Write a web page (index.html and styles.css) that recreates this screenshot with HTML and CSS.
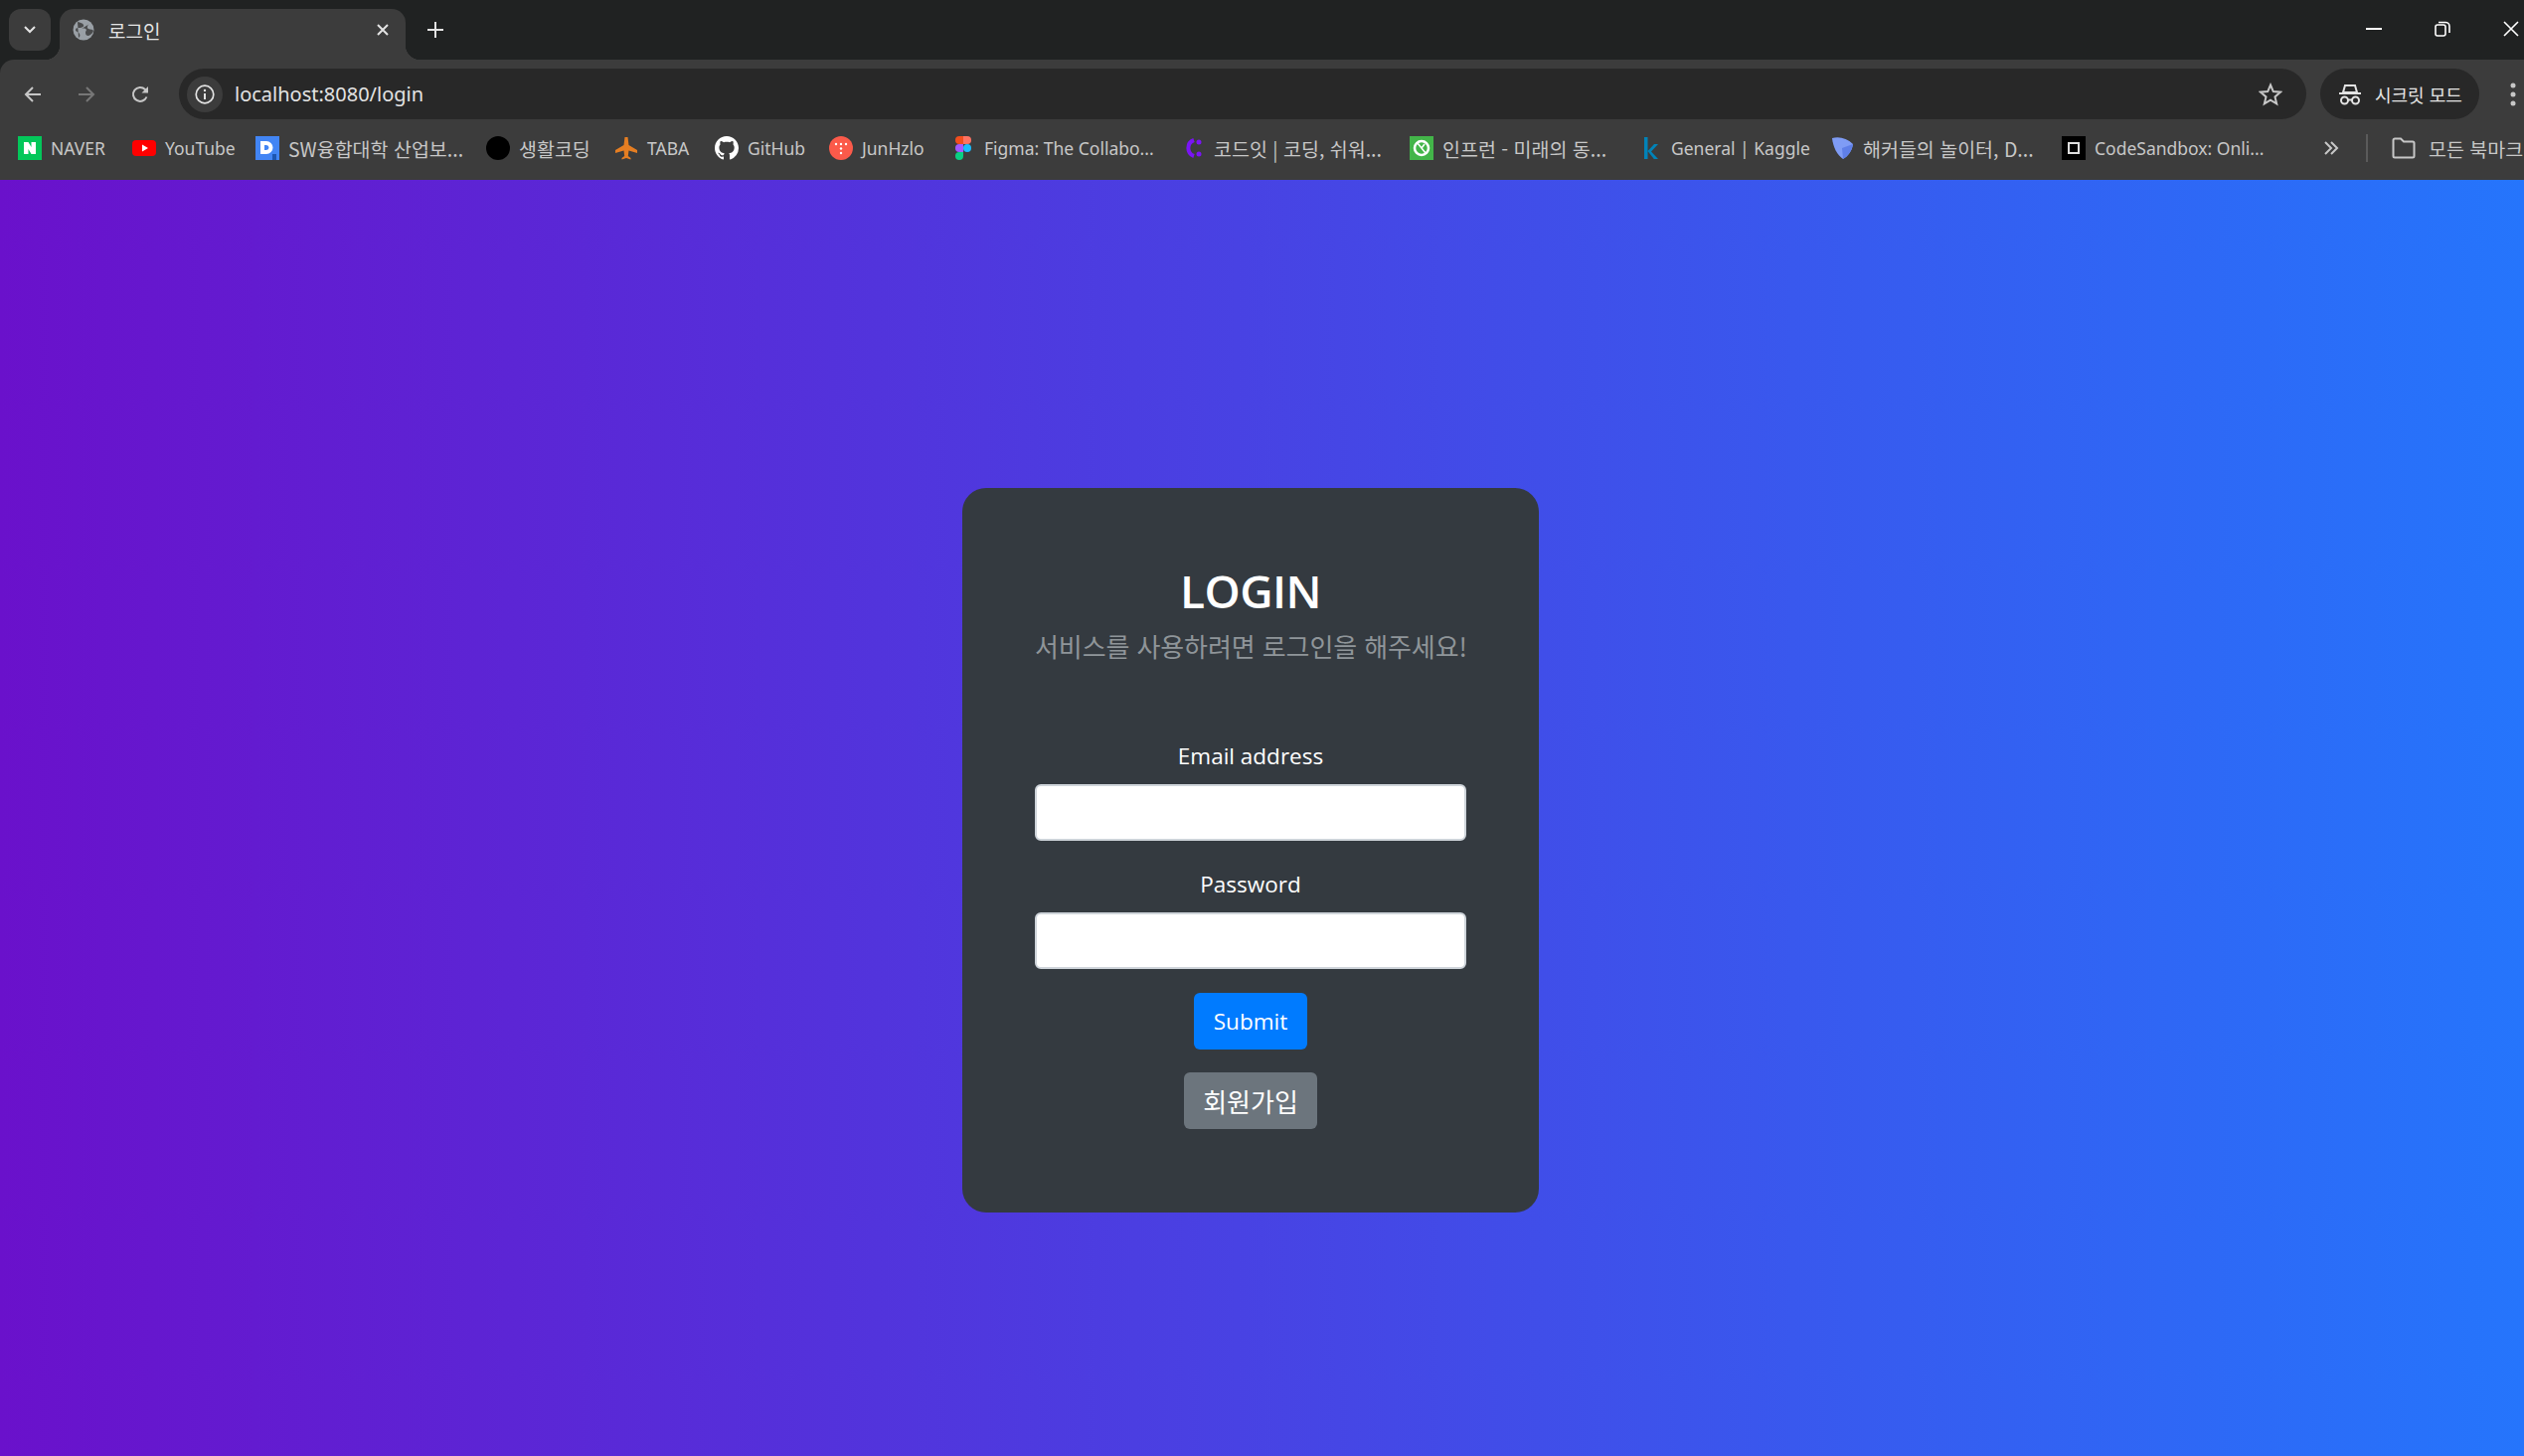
FILE: index.html
```html
<!DOCTYPE html>
<html lang="ko">
<head>
<meta charset="utf-8">
<title>로그인</title>
<link rel="stylesheet" href="styles.css">
</head>
<body>
<div class="chrome">
  <div class="tabstrip">
    <button class="tabsearch"><svg width="14" height="10" viewBox="0 0 14 10"><path d="M2 2l5 5 5-5" fill="none" stroke="#e3e3e3" stroke-width="2"/></svg></button>
    <div class="tab">
      <svg class="favicon" width="22" height="22" viewBox="0 0 22 22"><circle cx="11" cy="11" r="10.5" fill="#9aa0a6"/><path d="M5 3c3 1 5 1 6 3s-2 3-4 3-4 0-4 2 3 2 4 4 0 3-1 4M17 5c-2 1-3 4-1 5s4 0 5 2c-1 3-3 4-5 5-2 0-3-1-3-3s2-3 0-4-4 0-4 0" fill="#3c3c3c" opacity=".85"/></svg>
      <span class="tabtitle">로그인</span>
      <svg class="tabclose" width="12" height="12" viewBox="0 0 12 12"><path d="M1 1l10 10M11 1L1 11" stroke="#e3e3e3" stroke-width="2"/></svg>
    </div>
    <svg class="newtab" width="16" height="16" viewBox="0 0 16 16"><path d="M8 0v16M0 8h16" stroke="#e3e3e3" stroke-width="2"/></svg>
    <div class="winctl">
      <svg width="16" height="2" viewBox="0 0 16 2"><path d="M0 1h16" stroke="#fff" stroke-width="2"/></svg>
      <svg width="16" height="16" viewBox="0 0 16 16"><rect x="1" y="4" width="10" height="11" rx="2" fill="none" stroke="#fff" stroke-width="1.6"/><path d="M4 1.500h7a4 4 0 0 1 4 4V12" fill="none" stroke="#fff" stroke-width="1.6"/></svg>
      <svg width="16" height="16" viewBox="0 0 16 16"><path d="M1 1l14 14M15 1L1 15" stroke="#fff" stroke-width="1.6"/></svg>
    </div>
  </div>
  <div class="toolbar">
    <svg class="navicon" width="20" height="20" viewBox="0 0 20 20"><path d="M18 10H3M10 3l-7 7 7 7" fill="none" stroke="#c7c7c7" stroke-width="2"/></svg>
    <svg class="navicon" width="20" height="20" viewBox="0 0 20 20"><path d="M2 10h15M10 3l7 7-7 7" fill="none" stroke="#777" stroke-width="2"/></svg>
    <svg class="navicon reload" width="20" height="20" viewBox="0 0 20 20"><path d="M16.500 12.500A7 7 0 1 1 15 5l2.500 2.500" fill="none" stroke="#c7c7c7" stroke-width="2"/><path d="M18 2v6.500h-6.500z" fill="#c7c7c7"/></svg>
    <div class="omnibox">
      <span class="siteinfo"><svg width="20" height="20" viewBox="0 0 20 20"><circle cx="10" cy="10" r="8.800" fill="none" stroke="#e3e3e3" stroke-width="1.700"/><path d="M10 9v6" stroke="#e3e3e3" stroke-width="2"/><circle cx="10" cy="6" r="1.200" fill="#e3e3e3"/></svg></span>
      <span class="url">localhost:8080/login</span>
      <svg class="star" width="24" height="24" viewBox="0 0 24 24"><path d="M12 2.500l2.800 6.600 7.200.6-5.500 4.700 1.700 7-6.200-3.700-6.200 3.700 1.700-7L2 9.700l7.200-.6z" fill="none" stroke="#c7c7c7" stroke-width="2"/></svg>
    </div>
    <div class="incognito">
      <svg width="22" height="22" viewBox="0 0 22 22"><path d="M6 2h10l2 7H4z" fill="none" stroke="#e3e3e3" stroke-width="2"/><path d="M0 10h22" stroke="#e3e3e3" stroke-width="2"/><circle cx="5.500" cy="17" r="3.500" fill="none" stroke="#e3e3e3" stroke-width="2"/><circle cx="16.500" cy="17" r="3.500" fill="none" stroke="#e3e3e3" stroke-width="2"/><path d="M9 16.500h4" stroke="#e3e3e3" stroke-width="2"/></svg>
      <span>시크릿 모드</span>
    </div>
    <svg class="menu" width="6" height="24" viewBox="0 0 6 24"><circle cx="3" cy="3" r="2.500" fill="#c7c7c7"/><circle cx="3" cy="12" r="2.500" fill="#c7c7c7"/><circle cx="3" cy="21" r="2.500" fill="#c7c7c7"/></svg>
  </div>
  <div class="bookmarks">
    <a class="bm bm-naver"><svg width="24" height="24" viewBox="0 0 24 24"><rect width="24" height="24" fill="#03c75a"/><path d="M6 6h4.500l3 5V6H18v12h-4.500l-3-5v5H6z" fill="#fff"/></svg><span>NAVER</span></a>
    <a class="bm bm-youtube"><svg width="24" height="24" viewBox="0 0 24 24"><rect y="4" width="24" height="16" rx="4" fill="#f00"/><path d="M10 8.500l6 3.500-6 3.500z" fill="#fff"/></svg><span>YouTube</span></a>
    <a class="bm ko bm-sw"><svg width="24" height="24" viewBox="0 0 24 24"><rect width="24" height="24" fill="#4285f4"/><path fill-rule="evenodd" d="M5 5h6a6.500 6.500 0 0 1 0 13H5zM9 9v5h2a2.500 2.500 0 0 0 0-5z" fill="#fff"/><rect x="17" y="18" width="4" height="6" fill="#1d56b0"/></svg><span>SW융합대학 산업보...</span></a>
    <a class="bm ko bm-life"><svg width="24" height="24" viewBox="0 0 24 24"><circle cx="12" cy="12" r="12" fill="#000"/></svg><span>생활코딩</span></a>
    <a class="bm bm-taba"><svg width="24" height="24" viewBox="0 0 24 24"><path d="M10.500 1h3l1 8L23 14v3l-8.500-2.500-.7 5.500 2.700 2v1.500L12 22l-4.500 1.500V22l2.700-2-.7-5.500L1 17v-3l8.500-5z" fill="#e67e22"/></svg><span>TABA</span></a>
    <a class="bm bm-github"><svg width="24" height="24" viewBox="0 0 16 16"><path fill="#fff" d="M8 0C3.580 0 0 3.580 0 8c0 3.540 2.290 6.530 5.470 7.590.4.070.55-.17.55-.38 0-.19-.01-.82-.01-1.490-2.010.37-2.530-.49-2.690-.94-.09-.23-.48-.94-.82-1.130-.28-.15-.68-.52-.01-.53.630-.01 1.080.58 1.230.82.720 1.210 1.870.87 2.330.66.070-.52.280-.87.510-1.070-1.780-.2-3.640-.89-3.640-3.950 0-.87.310-1.590.820-2.150-.08-.2-.36-1.020.08-2.120 0 0 .67-.21 2.200.82.640-.18 1.320-.27 2-.27s1.360.09 2 .27c1.530-1.040 2.200-.82 2.200-.82.440 1.100.16 1.920.08 2.120.51.560.82 1.270.82 2.150 0 3.070-1.870 3.750-3.650 3.950.29.250.54.730.54 1.480 0 1.070-.01 1.930-.01 2.200 0 .21.150.46.550.38A8.010 8.010 0 0 0 16 8c0-4.420-3.580-8-8-8z"/></svg><span>GitHub</span></a>
    <a class="bm bm-junhzlo"><svg width="24" height="24" viewBox="0 0 24 24"><circle cx="12" cy="12" r="12" fill="#fb5a4a"/><g fill="#fff"><circle cx="7" cy="8" r="1.200"/><circle cx="12" cy="8" r="1.200"/><circle cx="17" cy="8" r="1.200"/><circle cx="12" cy="12.500" r="1.200"/><circle cx="12" cy="17" r="1.200"/></g></svg><span>JunHzlo</span></a>
    <a class="bm bm-figma"><svg width="24" height="24" viewBox="0 0 16 24"><path d="M4 0h4v8H4a4 4 0 0 1 0-8z" fill="#f24e1e"/><path d="M8 0h4a4 4 0 0 1 0 8H8z" fill="#ff7262"/><path d="M4 8h4v8H4a4 4 0 0 1 0-8z" fill="#a259ff"/><circle cx="12" cy="12" r="4" fill="#1abcfe"/><path d="M4 16h4v4a4 4 0 1 1-4-4z" fill="#0acf83"/></svg><span>Figma: The Collabo...</span></a>
    <a class="bm ko bm-codeit"><svg width="24" height="24" viewBox="0 0 24 24"><path d="M13 4a8.500 8.500 0 0 0 0 16" fill="none" stroke="#7a14f5" stroke-width="4"/><circle cx="18" cy="6" r="2.500" fill="#7a14f5"/><circle cx="18" cy="18" r="2.500" fill="#7a14f5"/></svg><span>코드잇 | 코딩, 쉬워...</span></a>
    <a class="bm ko bm-inflearn"><svg width="24" height="24" viewBox="0 0 24 24"><rect width="24" height="24" fill="#43b549"/><circle cx="12" cy="12" r="7" fill="none" stroke="#fff" stroke-width="2.500"/><path d="M8 7l8 10M12 12l3-4" stroke="#fff" stroke-width="1.500"/></svg><span>인프런 - 미래의 동...</span></a>
    <a class="bm bm-kaggle"><svg width="24" height="24" viewBox="0 0 24 24"><path d="M6 1h3.500v22H6zM9.500 15L16 8h4l-7 7.500L20 23h-4.200z" fill="#0083b8"/></svg><span>General | Kaggle</span></a>
    <a class="bm ko bm-hackers"><svg width="24" height="24" viewBox="0 0 24 24"><path d="M2 2c7-2 15 0 21 6-1 7-5 12-10 15C7 19 3 11 2 2z" fill="#7f9cf5"/><path d="M12 12l11-4c-1 7-5 12-10 15z" fill="#5f7fe8"/></svg><span>해커들의 놀이터, D...</span></a>
    <a class="bm bm-sandbox"><svg width="24" height="24" viewBox="0 0 24 24"><rect width="24" height="24" fill="#000"/><rect x="7" y="7" width="10" height="10" fill="none" stroke="#ddd" stroke-width="2"/></svg><span>CodeSandbox: Onli...</span></a>
    <svg class="more" width="16" height="14" viewBox="0 0 16 14"><path d="M2 1l6 6-6 6M8 1l6 6-6 6" fill="none" stroke="#c7c7c7" stroke-width="2"/></svg>
    <i class="sep"></i>
    <a class="bm ko allbm"><svg width="24" height="22" viewBox="0 0 24 22"><path d="M1.500 3a1.500 1.500 0 0 1 1.500-1.500h6l3 3h9a1.500 1.500 0 0 1 1.500 1.500v13a1.500 1.500 0 0 1-1.500 1.500H3A1.500 1.500 0 0 1 1.500 19z" fill="none" stroke="#c7c7c7" stroke-width="2"/></svg><span>모든 북마크</span></a>
  </div>
</div>
<main class="page">
  <section class="card">
    <h2 class="title">LOGIN</h2>
    <p class="subtitle">서비스를 사용하려면 로그인을 해주세요!</p>
    <form class="form">
      <label class="label" for="email">Email address</label>
      <input class="input" id="email" type="email">
      <label class="label" for="pw">Password</label>
      <input class="input" id="pw" type="password">
      <button class="btn primary" type="button">Submit</button>
      <button class="btn secondary" type="button">회원가입</button>
    </form>
  </section>
</main>
</body>
</html>
```
FILE: styles.css
```css
* { box-sizing: border-box; }
html, body { margin: 0; height: 100%; }
body {
  display: flex;
  flex-direction: column;
  overflow: hidden;
  font-family: "Open Sans", "Noto Sans CJK KR", sans-serif;
}
.chrome { flex: none; background: #202222; color: #c7c7c7; }
.tabstrip {
  height: 60px;
  display: flex;
  align-items: flex-end;
}
.tabsearch {
  width: 42px;
  height: 42px;
  margin: 0 9px 9px 9px;
  background: #3c3c3c;
  border: 0;
  border-radius: 12px;
  padding: 0;
  display: flex;
  align-items: center;
  justify-content: center;
}
.tab {
  width: 348px;
  height: 51px;
  background: #3c3c3c;
  border-radius: 14px 14px 0 0;
  display: flex;
  align-items: center;
  padding: 0 17px 9px 13px;
  position: relative;
}
.tab::before,
.tab::after {
  content: "";
  position: absolute;
  bottom: 0;
  width: 15px;
  height: 15px;
}
.tab::before {
  left: -15px;
  background: radial-gradient(circle at 0 0, transparent 15px, #3c3c3c 15.500px);
}
.tab::after {
  right: -15px;
  background: radial-gradient(circle at 100% 0, transparent 15px, #3c3c3c 15.500px);
}
.favicon { flex: none; }
.tabtitle {
  margin-left: 14px;
  flex: 1;
  color: #e3e3e3;
  font-size: 19px;
  font-family: "Noto Sans CJK KR", sans-serif;
}
.newtab { margin: 0 0 22px 22px; }
.winctl {
  margin-left: auto;
  display: flex;
  align-items: center;
  gap: 53px;
  height: 60px;
  padding-right: 5px;
  padding-bottom: 2px;
}
.toolbar {
  height: 60px;
  background: #3c3c3c;
  border-radius: 14px 0 0 0;
  display: flex;
  align-items: center;
  padding: 9px 0 0 23px;
}
.navicon { flex: none; margin-right: 34px; }
.navicon.reload { margin-right: 29px; }
.omnibox {
  flex: 1;
  height: 51px;
  background: #282828;
  border-radius: 26px;
  display: flex;
  align-items: center;
  padding: 0 24px 0 8px;
}
.siteinfo {
  width: 36px;
  height: 36px;
  border-radius: 50%;
  background: #3c3c3c;
  display: flex;
  align-items: center;
  justify-content: center;
}
.url {
  margin-left: 12px;
  flex: 1;
  font-family: "Noto Sans", sans-serif;
  font-size: 20px;
  color: #e3e3e3;
}
.incognito {
  flex: none;
  width: 160px;
  height: 51px;
  margin-left: 14px;
  background: #282828;
  border-radius: 26px;
  display: flex;
  align-items: center;
  padding-left: 19px;
  gap: 14px;
  color: #e3e3e3;
  font-family: "Noto Sans CJK KR", sans-serif;
  font-size: 18px;
}
.menu { flex: none; margin: 0 8px 0 31px; }
.bookmarks {
  height: 61px;
  background: #3c3c3c;
  display: flex;
  align-items: center;
  padding: 0 0 3px 18px;
  white-space: nowrap;
  font-family: "Noto Sans", "Noto Sans CJK KR", sans-serif;
  font-size: 17.500px;
  color: #c7c7c7;
  overflow: hidden;
}
.bm {
  flex: none;
  display: flex;
  align-items: center;
  gap: 9px;
}
.bm svg { flex: none; }
.ko { font-family: "Noto Sans CJK KR", sans-serif; font-size: 19.500px; }
.bm-naver { width: 115px; }
.bm-youtube { width: 124px; }
.bm-sw { width: 232px; }
.bm-life { width: 129px; }
.bm-taba { width: 101px; }
.bm-github { width: 115px; }
.bm-junhzlo { width: 123px; }
.bm-figma { width: 231px; }
.bm-codeit { width: 230px; }
.bm-inflearn { width: 230px; }
.bm-kaggle { width: 193px; }
.bm-hackers { width: 233px; }
.bm-sandbox { width: 263px; }
.more { flex: none; }
.sep { flex: none; width: 2px; height: 28px; background: #5a5a5a; margin-left: 27px; }
.allbm { margin-left: 24px; gap: 13px; }
.page {
  flex: 1;
  background: linear-gradient(to right, #6a11cb, #2575fc);
  display: flex;
  justify-content: center;
  align-items: flex-start;
  padding-top: 310px;
  padding-right: 23px;
}
.card {
  width: 580px;
  height: 729px;
  background: #343a40;
  border-radius: 24px;
  padding: 74px 73px 0;
  text-align: center;
  color: #fff;
}
.title {
  margin: 0;
  font-size: 46px;
  font-weight: 600;
  letter-spacing: -.5px;
  line-height: 58px;
}
.subtitle {
  margin: 9px 0 0;
  color: #8f9599;
  font-family: "Noto Sans CJK KR", sans-serif;
  font-size: 26px;
  letter-spacing: -.1px;
  line-height: 36px;
  height: 109px;
  white-space: nowrap;
}
.form { display: flex; flex-direction: column; align-items: center; }
.label {
  font-size: 22.500px;
  line-height: 36px;
  margin: 2px 0 10px;
}
.input {
  width: 434px;
  height: 57px;
  background: #fff;
  border: 2px solid #ced4da;
  border-radius: 6px;
  margin-bottom: 24px;
  flex: none;
}
.btn {
  height: 57px;
  border: 0;
  border-radius: 6px;
  color: #fff;
  font-family: inherit;
  font-size: 22.500px;
  padding: 0;
  flex: none;
}
.primary { background: #007bff; width: 114px; margin-bottom: 23px; }
.secondary { background: #6c757d; width: 134px; font-family: "Noto Sans CJK KR", sans-serif; font-size: 26px; }
```
